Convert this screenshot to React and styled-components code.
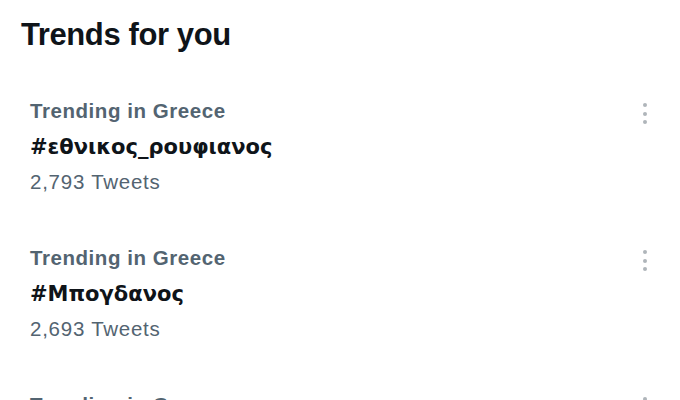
import React from "react";
import styled, { createGlobalStyle } from "styled-components";

const COLORS = {
  ink: "#0f1419",
  gray: "#536471",
  dot: "#afb5ba",
};

const trends = [
  { context: "Trending in Greece", name: "#εθνικος_ρουφιανος", count: "2,793 Tweets" },
  { context: "Trending in Greece", name: "#Μπογδανος", count: "2,693 Tweets" },
  { context: "Trending in Greece", name: "#Ελλάδα", count: "1,204 Tweets" },
];

const GlobalStyle = createGlobalStyle`
  html, body {
    margin: 0;
    padding: 0;
    background: #ffffff;
  }
  body {
    font-family: "Liberation Sans", Arial, sans-serif;
    color: ${COLORS.ink};
  }
`;

const Page = styled.div`
  width: 680px;
  height: 400px;
  overflow: hidden;
  padding-top: 17px;
  box-sizing: border-box;
`;

const Title = styled.h2`
  margin: 0 0 19px;
  padding-left: 21px;
  font-size: 31px;
  line-height: 36px;
  font-weight: 700;
  letter-spacing: -0.4px;
`;

const Row = styled.div`
  display: flex;
  align-items: flex-start;
  padding: 27px 25px 25px 30px;
`;

const Content = styled.div`
  flex: 1;
  display: flex;
  flex-direction: column;
`;

const Context = styled.span`
  font-size: 20.5px;
  line-height: 24px;
  font-weight: 700;
  letter-spacing: 0.55px;
  color: ${COLORS.gray};
`;

const Name = styled.span`
  margin-top: 10px;
  font-family: "DejaVu Sans", "Liberation Sans", sans-serif;
  font-size: 21px;
  line-height: 28px;
  font-weight: 700;
  color: ${COLORS.ink};
`;

const Count = styled.span`
  margin-top: 9px;
  font-size: 20.5px;
  line-height: 24px;
  letter-spacing: 0.75px;
  color: ${COLORS.gray};
`;

const MoreButton = styled.div`
  width: 20px;
  padding-top: 4px;
  display: flex;
  flex-direction: column;
  align-items: center;
  gap: 4.5px;
`;

const Dot = styled.span`
  width: 4px;
  height: 4px;
  border-radius: 50%;
  background: ${COLORS.dot};
`;

const Trend = ({ context, name, count }) => (
  <Row>
    <Content>
      <Context>{context}</Context>
      <Name>{name}</Name>
      <Count>{count}</Count>
    </Content>
    <MoreButton>
      <Dot />
      <Dot />
      <Dot />
    </MoreButton>
  </Row>
);

export default function App() {
  return (
    <>
      <GlobalStyle />
      <Page>
        <Title>Trends for you</Title>
        {trends.map((t, i) => (
          <Trend key={i} {...t} />
        ))}
      </Page>
    </>
  );
}
